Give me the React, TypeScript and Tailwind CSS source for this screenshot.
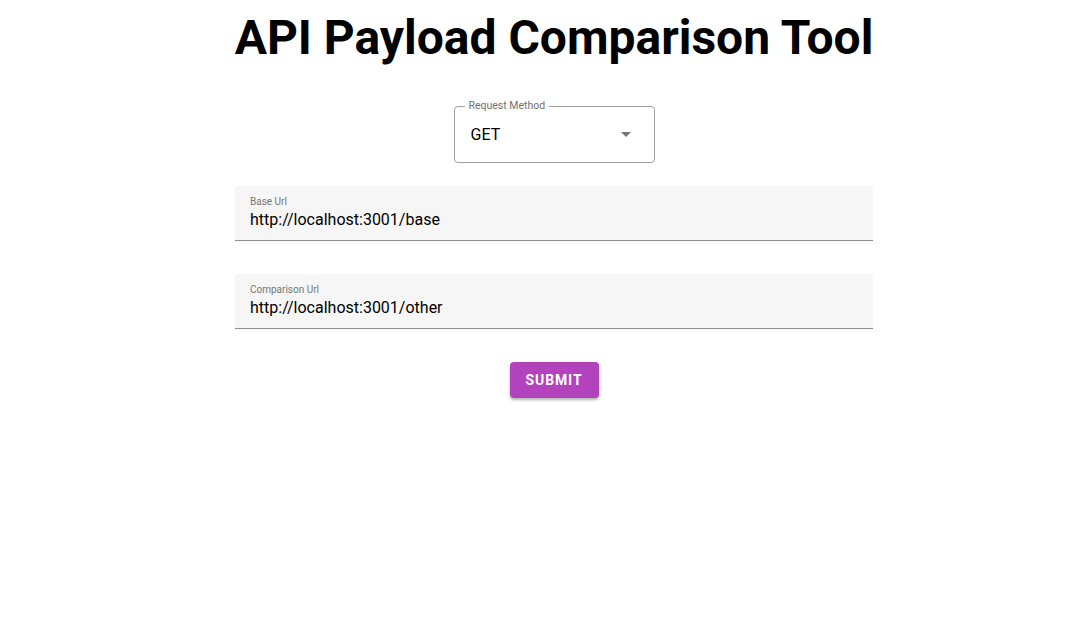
import { useState } from "react";

const FONT = { fontFamily: "Roboto, 'Liberation Sans', sans-serif" };

function FilledField({ label, value }: { label: string; value: string }) {
  return (
    <div className="flex h-[55px] w-full flex-col rounded-t-[4px] border-b border-[#8c8c8c] bg-[#f6f6f6] px-[15px] pt-[10px]">
      <span className="text-[10px] leading-[12px] text-[#757575]">{label}</span>
      <span className="mt-[2px] text-[16px] leading-[20px] text-black">{value}</span>
    </div>
  );
}

export default function App() {
  const [method] = useState("GET");

  return (
    <div className="min-h-[624px] w-full bg-white pl-[18px]" style={FONT}>
      <div className="mx-auto flex w-[638px] flex-col items-center">
        <h1 className="mt-[10px] whitespace-nowrap text-[48px] font-bold leading-[56px] text-black">
          API Payload Comparison Tool
        </h1>

        <div className="relative mt-[40px] flex h-[57px] w-[201px] items-center rounded-[4px] border border-[#9e9e9e] pr-[23px] pl-[16px]">
          {/* notched label sits over the top border */}
          <span className="absolute top-[-7px] left-[10px] bg-white px-[4px] text-[10.5px] leading-[12px] text-[#6f6f6f]">
            Request Method
          </span>
          <span className="flex-1 text-[16px] leading-[20px] text-black">{method}</span>
          <svg width="10" height="5" viewBox="0 0 10 5">
            <path d="M0 0 L10 0 L5 5 Z" fill="#757575" />
          </svg>
        </div>

        <div className="mt-[23px] flex w-full flex-col gap-[33px]">
          <FilledField label="Base Url" value="http://localhost:3001/base" />
          <FilledField label="Comparison Url" value="http://localhost:3001/other" />
        </div>

        <button
          type="button"
          className="mt-[33px] h-[36px] w-[89px] rounded-[4px] bg-[#b243bd] text-[14px] font-bold tracking-[0.9px] text-white shadow-[0_2px_3px_rgba(0,0,0,0.3)]"
        >
          SUBMIT
        </button>
      </div>
    </div>
  );
}
